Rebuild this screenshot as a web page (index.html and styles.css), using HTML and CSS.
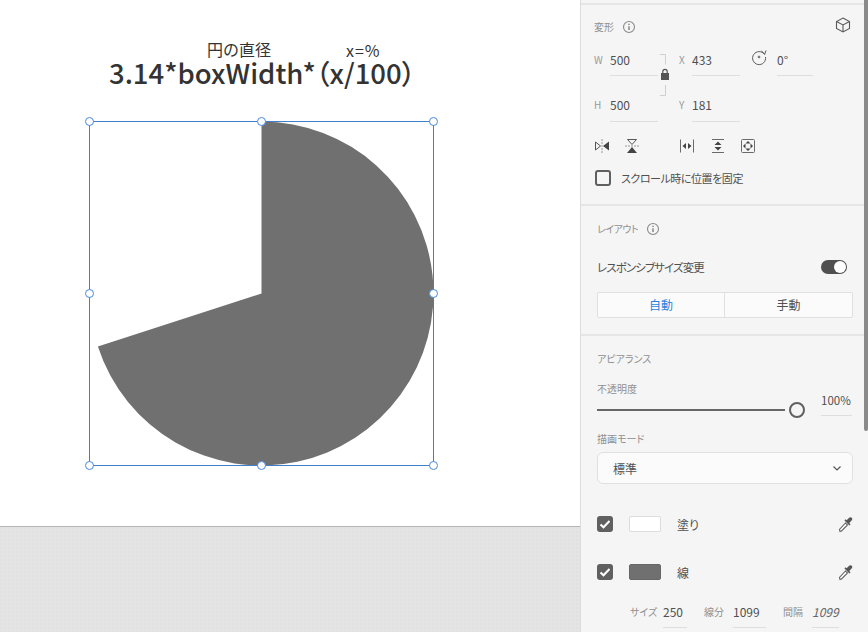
FILE: index.html
```html
<!DOCTYPE html>
<html lang="ja">
<head>
<meta charset="utf-8">
<title>変形</title>
<link rel="stylesheet" href="styles.css">
</head>
<body>
<div class="app">
  <main class="canvas">
    <div class="artboard">
      <span class="note note-a">円の直径</span>
      <span class="note note-b">x=%</span>
      <span class="formula">3.14*boxWidth*（x/100）</span>
      <svg class="stage" width="580" height="526" viewBox="0 0 580 526">
        <path class="pie" d="M261.5 121.5A172 172 0 1 1 97.9 346.6L261.5 293.5Z"/>
        <rect class="sel" x="89.5" y="121.5" width="344" height="344"/>
        <g class="handles">
          <circle cx="89.5" cy="121.5" r="4"/><circle cx="261.5" cy="121.5" r="4"/><circle cx="433.5" cy="121.5" r="4"/>
          <circle cx="89.5" cy="293.5" r="4"/><circle cx="433.5" cy="293.5" r="4"/>
          <circle cx="89.5" cy="465.5" r="4"/><circle cx="261.5" cy="465.5" r="4"/><circle cx="433.5" cy="465.5" r="4"/>
        </g>
      </svg>
    </div>
    <div class="pasteboard"></div>
  </main>
  <aside class="panel">
    <section class="sec sec-transform">
      <div class="head">
        <span class="sec-title">変形</span>
        <svg class="info" viewBox="0 0 14 14"><use href="#i-info"/></svg>
        <svg class="cube" width="18" height="18" viewBox="0 0 18 18"><path d="M9 2l6.500 3.500v7L9 16l-6.500-3.500v-7zM2.500 5.500L9 9l6.500-3.500M9 9v7"/></svg>
      </div>
      <div class="fields">
        <span class="lab">W</span><span class="field">500</span>
        <svg class="lock" width="12" height="42" viewBox="0 0 12 42"><path class="br" d="M2 .5h5.500v10M7.500 31v10.500H2"/><path class="lk" d="M3 19h8v7H3z"/><path class="lks" d="M4.800 19v-1.500a2.200 2.200 0 0 1 4.400 0V19"/></svg>
        <span class="lab">X</span><span class="field">433</span>
        <svg class="rot" width="18" height="18" viewBox="0 0 18 18"><path d="M14.500 6.500A6.500 6.500 0 1 0 15.500 9M11.500 2.800l3.200 3.500 1.300-3.800"/><circle cx="9" cy="9" r=".9"/></svg>
        <span class="field">0°</span>
        <span class="lab low">H</span><span class="field low">500</span>
        <span class="lab low">Y</span><span class="field low">181</span>
      </div>
      <div class="tools">
        <svg width="16" height="14" viewBox="0 0 16 14"><path class="ol" d="M1.500 3l5 4-5 4z"/><path class="fi" d="M15 2.500v9L9 7z"/><path class="ds" d="M8 0v14"/></svg>
        <svg class="t2" width="14" height="16" viewBox="0 0 14 16"><path class="ol" d="M2.500 1.500h9L7 6.500z"/><path class="fi" d="M2 15h10L7 9z"/><path class="ds" d="M0 8h14"/></svg>
        <svg class="t3" width="16" height="14" viewBox="0 0 16 14"><path class="ln" d="M1.500 .5v13M14.500 .5v13"/><path class="fi" d="M3.500 7l3.500-3v6zM12.500 7l-3.500-3v6z"/></svg>
        <svg class="t4" width="14" height="16" viewBox="0 0 14 16"><path class="ln" d="M1 1.500h12M1 14.500h12"/><path class="fi" d="M7 3.500l3.500 3.500h-7zM7 12.500l3.500-3.500h-7z"/></svg>
        <svg class="t5" width="16" height="16" viewBox="0 0 16 16"><rect class="ln" x="1.500" y="1.500" width="13" height="13" rx="1"/><path class="fi" d="M8 3l2.500 2.500h-5zM8 13l2.500-2.500h-5zM3 8l2.500-2.500v5zM13 8l-2.500-2.500v5z"/></svg>
      </div>
      <label class="fix"><span class="box"></span><span class="fix-text">スクロール時に位置を固定</span></label>
    </section>
    <section class="sec sec-layout">
      <div class="head">
        <span class="sec-title">レイアウト</span>
        <svg class="info" viewBox="0 0 14 14"><use href="#i-info"/></svg>
      </div>
      <div class="resp"><span class="resp-text">レスポンシブサイズ変更</span><span class="toggle"></span></div>
      <div class="seg"><span class="on">自動</span><span>手動</span></div>
    </section>
    <section class="sec sec-appear">
      <div class="sec-title">アピアランス</div>
      <div class="sec-title op-title">不透明度</div>
      <div class="op"><span class="track"></span><span class="thumb"></span><span class="pct">100%</span></div>
      <div class="sec-title mode-title">描画モード</div>
      <div class="select"><span>標準</span><svg width="8" height="5" viewBox="0 0 8 5"><path d="M.5.500L4 4 7.500.500"/></svg></div>
      <div class="paint">
        <span class="cb"><svg width="16" height="16" viewBox="0 0 16 16"><path d="M3.500 8.500l3 2.800 6-6.300"/></svg></span>
        <span class="sw sw-white"></span><span class="pl">塗り</span>
        <svg class="drop" width="16" height="18" viewBox="0 0 16 18"><use href="#i-drop"/></svg>
      </div>
      <div class="paint stroke">
        <span class="cb"><svg width="16" height="16" viewBox="0 0 16 16"><path d="M3.500 8.500l3 2.800 6-6.300"/></svg></span>
        <span class="sw sw-gray"></span><span class="pl">線</span>
        <svg class="drop" width="16" height="18" viewBox="0 0 16 18"><use href="#i-drop"/></svg>
      </div>
      <div class="dash">
        <span class="lab-s">サイズ</span><span class="fs f1">250</span>
        <span class="lab-s l2">線分</span><span class="fs f2">1099</span>
        <span class="lab-s l3">間隔</span><span class="fs f3">1099</span>
      </div>
    </section>
    <div class="scroll"></div>
  </aside>
</div>
<svg class="defs" width="0" height="0">
  <symbol id="i-info" viewBox="0 0 14 14"><circle cx="7" cy="7" r="5.500" fill="none" stroke="#8a8a8a" stroke-width="1.100"/><path d="M7 6.200v3.800M7 3.800v1.200" stroke="#777" stroke-width="1.300"/></symbol>
  <symbol id="i-drop" viewBox="0 0 16 18"><path d="M2 16.500l-.5-2 6-6.500 2 2-6 6z" fill="#fff" stroke="#666" stroke-width="1.100"/><path d="M6.500 5.500l5 5 1-1-1.200-1.500 2.700-3a1.800 1.800 0 0 0-2.500-2.500l-3 2.800-1.300-1.100z" fill="#555"/></symbol>
</svg>
</body>
</html>
```

FILE: styles.css
```css
* { box-sizing: border-box; }
html, body { margin: 0; padding: 0; }
body {
  width: 868px;
  height: 632px;
  overflow: hidden;
  font-family: "Noto Sans CJK JP", "Noto Sans", sans-serif;
  color: #505050;
}
.app { display: flex; width: 868px; height: 632px; }
.defs { position: absolute; }

.canvas { width: 580px; display: flex; flex-direction: column; }
.artboard { position: relative; height: 526px; background: #fff; }
.pasteboard {
  flex: 1;
  background-color: #e4e4e4;
  background-image: radial-gradient(circle at 1px 1px, #e1e1e1 .8px, transparent 1px);
  background-size: 4px 4px;
  border-top: 1px solid #b5b5b5;
}
.stage { position: absolute; left: 0; top: 0; }
.pie { fill: #707070; }
.sel { fill: none; stroke: #3f7fce; stroke-width: 1; }
.handles circle { fill: #fff; stroke: #4a8ad8; stroke-width: 1; }
.note, .formula { position: absolute; white-space: nowrap; color: #333; line-height: 1; z-index: 1; }
.note-a { left: 207px; top: 41px; font-size: 16px; }
.note-b { left: 346px; top: 42px; font-size: 16px; letter-spacing: 1px; }
.formula { left: 109px; top: 59px; font-size: 27.500px; font-weight: 500; font-feature-settings: "palt"; }

.panel { position: relative; width: 288px; background: #f5f5f5; border-left: 1px solid #dcdcdc; }
.scroll { position: absolute; right: 0; top: 0; width: 4px; height: 431px; background: #8a8a8a; border-radius: 0 0 2px 2px; }
.sec { border-bottom: 2px solid #e6e6e6; padding: 0 14px 0 16px; font-feature-settings: "palt"; }
.sec-transform { border-top: 2px solid #e6e6e6; margin-top: 3px; height: 203px; padding-left: 13px; position: relative; }
.sec-layout { height: 130px; padding-top: 13px; }
.sec-appear { border-bottom: 0; padding-top: 13px; position: relative; }
.head { display: flex; align-items: center; height: 20px; gap: 8px; margin-top: 12px; }
.sec-layout .head { margin-top: 0; }
.sec-layout .sec-title { letter-spacing: -.5px; }
.sec-title { font-size: 10px; color: #909090; line-height: 20px; }
.info { width: 14px; height: 14px; }
.sec-transform .info { margin-top: -1px; }
.cube { margin: -4px 2px 0 auto; fill: none; stroke: #5a5a5a; stroke-width: 1.100; }

.fields {
  display: grid;
  grid-template-columns: 16px 48px 21px 13px 48px 37px 36px;
  grid-template-rows: 31px 31px;
  row-gap: 15px;
  margin-top: 8px;
  position: relative;
}
.lab { font-size: 10px; color: #9a9a9a; line-height: 29px; }
.field { font-size: 12px; color: #505050; line-height: 29px; border-bottom: 1px solid #dedede; height: 31px; }
.lab.low, .field.low { line-height: 27px; }
.lock { grid-column: 3; grid-row: 1 / 3; margin: 9px 0 0 0; }
.br { fill: none; stroke: #cfcfcf; }
.lk { fill: #555; }
.lks { fill: none; stroke: #555; stroke-width: 1.200; }
.rot { grid-column: 6; grid-row: 1; margin: 3px 0 0 10px; fill: none; stroke: #5a5a5a; stroke-width: 1; }

.tools { display: flex; align-items: center; height: 16px; margin-top: 16px; }
.tools svg { display: block; }
.ol { fill: none; stroke: #555; }
.fi { fill: #444; }
.ds { fill: none; stroke: #999; stroke-dasharray: 2 1; }
.ln { fill: none; stroke: #6a6a6a; }
.t2 { margin-left: 15px; }
.t3 { margin-left: 40px; }
.t4 { margin-left: 16px; }
.t5 { margin-left: 15px; }

.fix { display: flex; align-items: center; gap: 10px; font-size: 11px; color: #505050; margin-top: 15px; margin-left: 1px; height: 18px; }
.fix-text { letter-spacing: -.45px; }
.box { width: 16px; height: 16px; border: 2px solid #606060; border-radius: 3px; }

.resp { display: flex; justify-content: space-between; align-items: center; margin-top: 18px; height: 20px; font-size: 11.500px; }
.resp-text { letter-spacing: -.9px; }
.toggle { position: relative; width: 26px; height: 14px; border-radius: 7px; background: #505050; margin-right: 7px; }
.toggle::after { content: ""; position: absolute; right: 1px; top: 1px; width: 12px; height: 12px; border-radius: 50%; background: #fff; }
.seg { display: flex; margin-top: 15px; width: 256px; height: 26px; background: #fbfbfb; border: 1px solid #e0e0e0; border-radius: 2px; font-size: 12px; }
.seg span { flex: 1; text-align: center; line-height: 24px; }
.seg span:first-child { flex: 0 0 126px; }
.seg span + span { border-left: 1px solid #e0e0e0; }
.seg .on { color: #2c7fdc; }

.op-title { margin-top: 10px; }
.op { position: relative; height: 26px; }
.track { position: absolute; left: 0; top: 10px; width: 188px; height: 2px; background: #666; }
.thumb { position: absolute; left: 192px; top: 3px; width: 16px; height: 16px; border: 2px solid #606060; border-radius: 50%; background: #f5f5f5; }
.pct { position: absolute; left: 224px; top: -12px; width: 31px; height: 29px; font-size: 11.500px; line-height: 26px; border-bottom: 1px solid #dedede; }
.mode-title { margin-top: 4px; }
.select { display: flex; align-items: center; justify-content: space-between; margin-top: 3px; width: 256px; height: 32px; padding: 0 11px 0 15px; background: #fbfbfb; border: 1px solid #e0e0e0; border-radius: 6px; font-size: 12px; }
.select svg { fill: none; stroke: #555; stroke-width: 1.200; }
.paint { display: flex; align-items: center; height: 16px; margin-top: 32px; font-size: 12px; }
.cb { width: 16px; height: 16px; border-radius: 3px; background: #606060; }
.cb svg { display: block; fill: none; stroke: #fff; stroke-width: 2; }
.sw { width: 32px; height: 16px; margin-left: 16px; border-radius: 2px; }
.sw-white { background: #fff; border: 1px solid #dcdcdc; }
.sw-gray { background: #707070; border: 1px solid #666; }
.pl { margin-left: 16px; }
.drop { margin-left: auto; }
.dash { position: relative; height: 32px; margin-top: 17px; font-size: 12px; }
.lab-s { position: absolute; top: 7px; left: 33px; font-size: 10px; color: #909090; line-height: 16px; }
.l2 { left: 107px; }
.l3 { left: 186px; }
.fs { position: absolute; top: 0; height: 31px; line-height: 30px; border-bottom: 1px solid #dedede; }
.f1 { left: 66px; width: 24px; }
.f2 { left: 136px; width: 33px; }
.f3 { left: 215px; width: 27px; font-style: italic; color: #666; }
```
